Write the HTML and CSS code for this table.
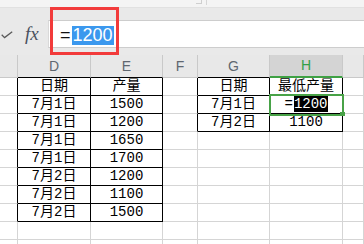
FILE: index.html
```html
<!DOCTYPE html>
<html lang="zh-CN">
<head>
<meta charset="utf-8">
<title>最低产量</title>
<link rel="stylesheet" href="styles.css">
</head>
<body>
  <div class="top">
    <span class="tb-corner"></span>
    <span class="tb-rule"></span>
  </div>

  <div class="bar">
    <div class="fx-area">
      <svg class="check" width="12" height="8" viewBox="0 0 12 8">
        <polyline points="0.7,3.8 3.6,6.6 11.2,0.8" fill="none" stroke="#595959" stroke-width="1.3"/>
      </svg>
      <span class="fx">fx</span>
    </div>
    <div class="input"><span class="eq">=</span><span class="hl">1200</span></div>
  </div>

  <div class="sheet">
    <!-- column headers -->
    <div class="hdr"></div>
    <div class="hdr bb">D</div>
    <div class="hdr bb">E</div>
    <div class="hdr">F</div>
    <div class="hdr bb">G</div>
    <div class="hdr cur">H</div>
    <div class="hdr"></div>

    <div class="c br"></div><div class="c br bb">日期</div><div class="c br bb">产量</div><div class="c br"></div><div class="c br bb">日期</div><div class="c br bb">最低产量</div><div class="c"></div>
    <div class="c br"></div><div class="c br bb">7月1日</div><div class="c br bb">1500</div><div class="c br"></div><div class="c br bb">7月1日</div><div class="c br bb active"><span class="eq2">=</span><span class="hl2">1200</span></div><div class="c"></div>
    <div class="c br"></div><div class="c br bb">7月1日</div><div class="c br bb">1200</div><div class="c br"></div><div class="c br bb">7月2日</div><div class="c br bb">1100</div><div class="c"></div>
    <div class="c br"></div><div class="c br bb">7月1日</div><div class="c br bb">1650</div><div class="c"></div><div class="c"></div><div class="c"></div><div class="c"></div>
    <div class="c br"></div><div class="c br bb">7月1日</div><div class="c br bb">1700</div><div class="c"></div><div class="c"></div><div class="c"></div><div class="c"></div>
    <div class="c br"></div><div class="c br bb">7月2日</div><div class="c br bb">1200</div><div class="c"></div><div class="c"></div><div class="c"></div><div class="c"></div>
    <div class="c br"></div><div class="c br bb">7月2日</div><div class="c br bb">1100</div><div class="c"></div><div class="c"></div><div class="c"></div><div class="c"></div>
    <div class="c br"></div><div class="c br bb">7月2日</div><div class="c br bb">1500</div><div class="c"></div><div class="c"></div><div class="c"></div><div class="c"></div>
    <div class="c"></div><div class="c"></div><div class="c"></div><div class="c"></div><div class="c"></div><div class="c"></div><div class="c"></div>
    <div class="c"></div><div class="c"></div><div class="c"></div><div class="c"></div><div class="c"></div><div class="c"></div><div class="c"></div>
  </div>

  <div class="callout"></div>
</body>
</html>
```

FILE: styles.css
```css
html, body {
  margin: 0;
  padding: 0;
  background: #ffffff;
  overflow: hidden;
}

body {
  width: 364px;
  height: 244px;
  position: relative;
}

/* strip of the toolbar above the formula bar */
.top {
  height: 7px;
  background: #f4f4f4;
  display: flex;
  align-items: flex-start;
}

.tb-corner {
  margin-left: 196px;
  width: 5px;
  height: 3px;
  border-right: 1px solid #cfcfcf;
  border-bottom: 1px solid #cfcfcf;
}

.tb-rule {
  margin-left: 4px;
  width: 1px;
  height: 5px;
  background: #d6d6d6;
}

/* formula bar */
.bar {
  height: 48px;
  box-sizing: border-box;
  padding-top: 12px;
  background: #e9e9e9;
  border-top: 1px solid #e1e1e1;
  display: flex;
  align-items: flex-start;
}

.fx-area {
  width: 48px;
  height: 28px;
  display: flex;
  align-items: center;
  flex: none;
}

.check {
  margin-left: 1px;
  margin-top: 2px;
}

.fx {
  margin-left: 12px;
  font-family: "Liberation Serif", serif;
  font-style: italic;
  font-size: 19px;
  color: #4a5160;
  line-height: 28px;
}

.input {
  flex: 1;
  height: 28px;
  box-sizing: border-box;
  background: #ffffff;
  border-top: 1px solid #cdcdcd;
  border-bottom: 1px solid #cdcdcd;
  border-left: 1px solid #d9d9d9;
  padding: 5px 0 0 11px;
  font-family: "Liberation Sans", sans-serif;
  font-size: 18px;
  line-height: 19px;
  color: #111111;
  display: flex;
  align-items: flex-start;
}

.eq {
  margin-right: 1px;
}

.hl {
  background: #3b98ee;
  color: #ffffff;
  padding: 0 1px;
}

/* worksheet grid, clipped at the window's bottom edge */
.sheet {
  height: 189px;
  overflow: hidden;
  display: grid;
  grid-template-columns: 18px 73px 72px 35px 72px 73px 21px;
  grid-template-rows: 23px repeat(10, 18px);
}

.sheet > div {
  box-sizing: border-box;
  border-right: 1px solid #d5d5d5;
  border-bottom: 1px solid #d5d5d5;
  text-align: center;
  overflow: hidden;
  white-space: nowrap;
}

.sheet > .hdr {
  background: #e8e8e8;
  border-right-color: #c9c9c9;
  border-bottom-color: #c9c9c9;
  font-family: "Liberation Sans", sans-serif;
  font-size: 14px;
  line-height: 22px;
  color: #5f6770;
}

.sheet > .hdr.cur {
  background: #d4d4d4;
  color: #33a047;
  border-bottom: 2px solid #3fa144;
  line-height: 21px;
}

.sheet > .c {
  font-family: "Liberation Mono", "Noto Sans CJK SC", monospace;
  font-size: 14px;
  line-height: 17px;
  color: #000000;
}

.sheet > .br { border-right-color: #000000; }
.sheet > .bb { border-bottom-color: #000000; }

/* cell being edited, with its selection frame and fill handle */
.sheet > .active {
  position: relative;
  overflow: visible;
}

.active::after {
  content: "";
  position: absolute;
  left: -1px;
  top: -2px;
  right: -2px;
  bottom: -3px;
  border: 2px solid #48a247;
}

.active::before {
  content: "";
  position: absolute;
  right: -3px;
  bottom: -3px;
  width: 5px;
  height: 4px;
  background: #48a247;
  z-index: 1;
}

.eq2 {
  margin-right: 1px;
}

.hl2 {
  background: #000000;
  color: #ffffff;
}

/* red frame drawn over the formula bar */
.callout {
  position: absolute;
  left: 50px;
  top: 7px;
  width: 69px;
  height: 48px;
  box-sizing: border-box;
  border: 3px solid #f23b3b;
}
```
